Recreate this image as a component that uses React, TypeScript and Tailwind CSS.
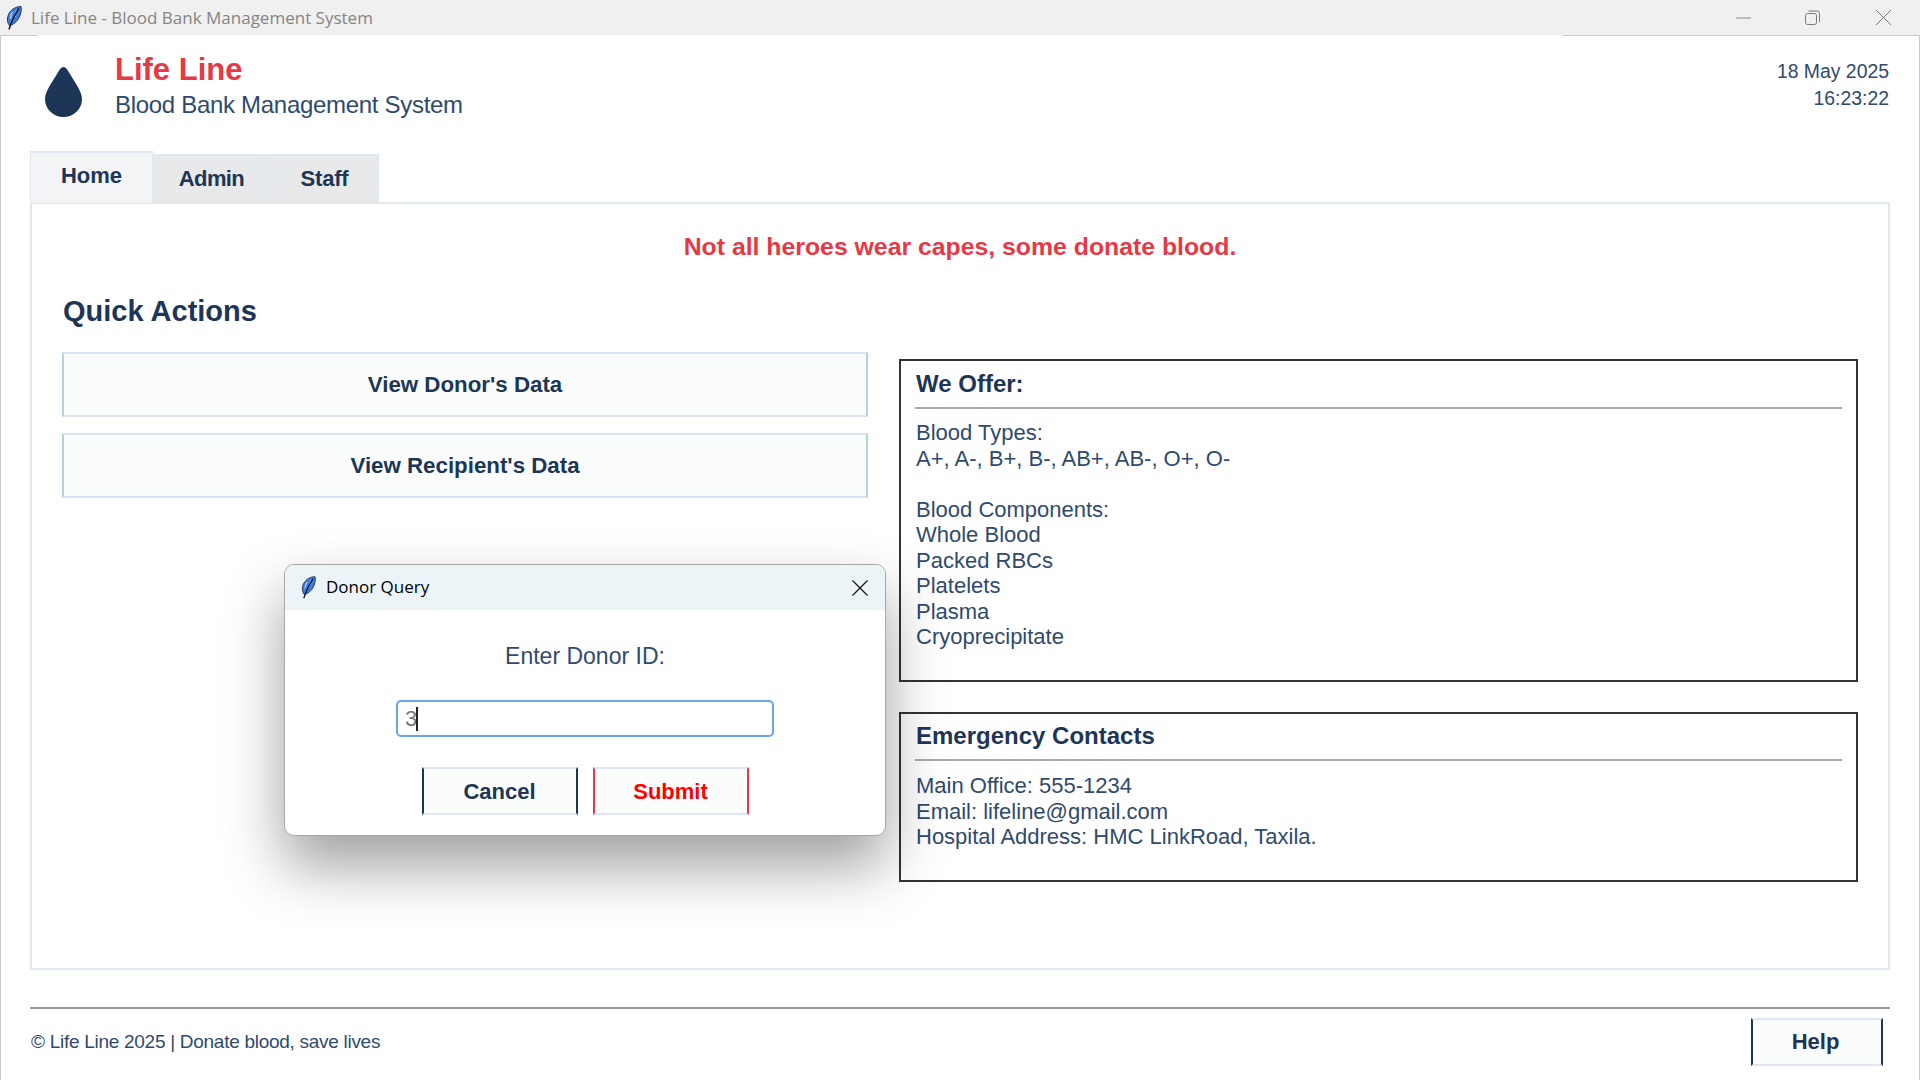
import React from 'react';

function Feather({ className }: { className?: string }) {
    return (
        <svg viewBox="0 0 16 24" className={className}>
            <path d="M15 0.5 C9.5 0.5 3.5 4 1.8 10.5 C1 14 1.5 17 3.5 19.5 C8.5 18.5 13 13.5 14.5 8 C15.3 5 15.6 2.5 15 0.5 Z" fill="#3f7fdc" stroke="#24375e" strokeWidth="1" />
            <path d="M6.5 6 C5 8 4.5 10.5 4.5 13 M10.5 4.5 C9.5 7 9 9 9 11" stroke="#a9ccf5" strokeWidth="1.3" fill="none" />
            <path d="M13 2.5 C9 8 6 14 3 23.5" fill="none" stroke="#0e1526" strokeWidth="1.4" />
        </svg>
    );
}

function Drop() {
    return (
        <svg viewBox="0 0 37 50" className="w-[37px] h-[50px] shrink-0">
            <path d="M18.5 0 C21 0 23 3.5 25 7 C29 14 37 24 37 32 A18.5 18 0 0 1 0 32 C0 24 8 14 12 7 C14 3.5 16 0 18.5 0 Z" fill="#1d3557" />
        </svg>
    );
}

function WindowControls() {
    return (
        <div className="flex items-center h-full">
            <svg viewBox="0 0 15 15" className="w-[15px] h-[15px] mr-[54px]">
                <path d="M0 8 H15" stroke="#8a8a8a" strokeWidth="1" />
            </svg>
            <svg viewBox="0 0 15 15" className="w-[15px] h-[15px] mr-[56px]">
                <rect x="0.5" y="3.5" width="11" height="11" rx="2" fill="none" stroke="#7a7a7a" />
                <path d="M3.5 1 H12 A2.5 2.5 0 0 1 14.5 3.5 V12" fill="none" stroke="#7a7a7a" />
            </svg>
            <svg viewBox="0 0 15 15" className="w-[15px] h-[15px] mr-[29px]">
                <path d="M0 0 L15 15 M15 0 L0 15" stroke="#777777" strokeWidth="1" />
            </svg>
        </div>
    );
}

function InfoBox({ title, className, titleClass, bodyClass, children }: { title: string; className: string; titleClass: string; bodyClass: string; children: React.ReactNode }) {
    return (
        <div className={`border-2 border-[#333333] px-[14px] bg-white ${className}`}>
            <div className={`flex items-center pl-[1px] text-[24px] font-bold text-[#1d3557] ${titleClass}`}>{title}</div>
            <div className="h-[2px] bg-[#aaaaaa]" />
            <div className={`pl-[1px] text-[22px] leading-[25.5px] text-[#2f4a6d] ${bodyClass}`}>{children}</div>
        </div>
    );
}

const BRACKET_BTN = 'h-[48px] bg-[#fbfdfd] border-x-2 border-y-2 border-x-[#1d3557] border-y-[#dfe6f0] text-[22px] font-bold text-[#1d3557] flex items-center justify-center';

export default function App() {
    return (
        <div className="w-[1920px] h-[1080px] relative overflow-hidden bg-white flex flex-col font-['Liberation_Sans',Arial,sans-serif]">
            {/* Title bar */}
            <div className="h-[35px] shrink-0 bg-[#f0f0f0] flex items-center justify-between pl-[6px]">
                <div className="flex items-center">
                    <Feather className="w-[16px] h-[24px]" />
                    <span className="ml-[9px] text-[17px] text-[#858585] font-['Open_Sans',sans-serif]">Life Line - Blood Bank Management System</span>
                </div>
                <WindowControls />
            </div>
            <div className="h-px shrink-0 flex">
                <div className="w-[38px] bg-[#cccccc]" />
                <div className="flex-1" />
                <div className="w-[358px] bg-[#cccccc]" />
            </div>

            <div className="flex-1 flex flex-col border-x border-[#cccccc] pl-[29px] pr-[29px]">
                {/* Header */}
                <div className="h-[115px] shrink-0 flex justify-between">
                    <div className="flex">
                        <div className="ml-[15px] mt-[31px]"><Drop /></div>
                        <div className="ml-[33px] mt-[16px]">
                            <div className="text-[31px] leading-[36px] font-bold text-[#e63946]">Life Line</div>
                            <div className="text-[24px] leading-[34px] tracking-[-0.3px] text-[#2f4a6d]">Blood Bank Management System</div>
                        </div>
                    </div>
                    <div className="mt-[22px] mr-[1px] text-right text-[19.4px] leading-[27px] text-[#2f4a6d]">
                        <div>18 May 2025</div>
                        <div>16:23:22</div>
                    </div>
                </div>

                {/* Tabs */}
                <div className="h-[52px] shrink-0 flex items-end relative z-10 -mb-px text-[22px] font-bold text-[#1d3557]">
                    <div className="w-[123px] h-[52px] bg-[#f3f4f6] border-t-2 border-x border-[#e2e8f0] flex items-center justify-center pb-[5px]">Home</div>
                    <div className="w-[119px] h-[49px] bg-[#e8e9eb] border-t-2 border-r-2 border-[#e2e8f0] flex items-center justify-center pb-[2px] tracking-[-0.6px]">Admin</div>
                    <div className="w-[107px] h-[49px] bg-[#e8e9eb] border-t-2 border-r-2 border-[#e2e8f0] flex items-center justify-center pb-[2px] tracking-[-0.2px]">Staff</div>
                </div>

                {/* Notebook panel */}
                <div className="h-[768px] shrink-0 border-2 border-[#e2e8f0] pl-[30px] pr-[30px]">
                    <div className="mt-[28px] text-center text-[24.8px] leading-[30px] font-bold text-[#e63946]">Not all heroes wear capes, some donate blood.</div>
                    <div className="mt-[33px] flex gap-[31px]">
                        <div className="w-[806px] shrink-0">
                            <div className="h-[34px] flex items-center pl-[1px] text-[29px] font-bold text-[#1d3557]">Quick Actions</div>
                            <div className="mt-[23px] flex flex-col gap-[16px]">
                                <div className="h-[65px] bg-[#fbfdfd] border-2 border-x-[#a8dadc] border-y-[#dce3f0] flex items-center justify-center text-[22.3px] font-bold text-[#1d3557]">View Donor's Data</div>
                                <div className="h-[65px] bg-[#fbfdfd] border-2 border-x-[#a8dadc] border-y-[#dce3f0] flex items-center justify-center text-[22.3px] font-bold text-[#1d3557]">View Recipient's Data</div>
                            </div>
                        </div>
                        <div className="flex-1 mt-[64px] flex flex-col gap-[30px]">
                            <InfoBox title="We Offer:" className="h-[323px]" titleClass="h-[46px]" bodyClass="mt-[11px]">
                                <div>Blood Types:</div>
                                <div>A+, A-, B+, B-, AB+, AB-, O+, O-</div>
                                <div className="h-[25.5px]" />
                                <div>Blood Components:</div>
                                <div>Whole Blood</div>
                                <div>Packed RBCs</div>
                                <div>Platelets</div>
                                <div>Plasma</div>
                                <div>Cryoprecipitate</div>
                            </InfoBox>
                            <InfoBox title="Emergency Contacts" className="h-[170px]" titleClass="h-[45px] pb-[2px]" bodyClass="mt-[12px]">
                                <div>Main Office: 555-1234</div>
                                <div>Email: lifeline@gmail.com</div>
                                <div>Hospital Address: HMC LinkRoad, Taxila.</div>
                            </InfoBox>
                        </div>
                    </div>
                </div>

                {/* Footer */}
                <div className="mt-[37px] h-[2px] shrink-0 bg-[#999999]" />
                <div className="mt-[9px] flex justify-between pl-[1px] pr-[7px]">
                    <div className="h-[48px] flex items-center text-[19px] tracking-[-0.28px] text-[#2f4a6d]">© Life Line 2025 | Donate blood, save lives</div>
                    <div className={`${BRACKET_BTN} w-[132px] pb-[2px] pr-[3px]`}>Help</div>
                </div>
            </div>

            {/* Donor Query dialog */}
            <div className="absolute left-[284px] top-[564px] w-[602px] h-[272px] rounded-[10px] border border-[#a8a8a8] bg-white overflow-hidden shadow-[0_30px_60px_rgba(0,0,0,0.38)] flex flex-col items-center">
                <div className="w-full h-[45px] shrink-0 bg-[#edf4f8] flex items-center justify-between pl-[16px] pr-[17px]">
                    <div className="flex items-center pb-[1px]">
                        <Feather className="w-[15px] h-[23px]" />
                        <span className="ml-[10px] text-[17px] text-black font-['Open_Sans',sans-serif]">Donor Query</span>
                    </div>
                    <svg viewBox="0 0 16 16" className="w-[16px] h-[16px]">
                        <path d="M0.5 0.5 L15.5 15.5 M15.5 0.5 L0.5 15.5" stroke="#111111" strokeWidth="1.2" />
                    </svg>
                </div>
                <div className="mt-[31px] h-[30px] flex items-center text-[23px] text-[#2f4a6d]">Enter Donor ID:</div>
                <div className="mt-[29px] relative">
                    <input readOnly value="3" className="block w-[378px] h-[37px] border-2 border-[#6ba4ec] rounded-[5px] pl-[7px] text-[22px] text-[#777777] outline-none" />
                    <div className="absolute left-[20px] top-[7px] w-[2px] h-[24px] bg-[#222222]" />
                </div>
                <div className="mt-[30px] flex gap-[15px]">
                    <div className={`${BRACKET_BTN} w-[156px]`}>Cancel</div>
                    <div className="w-[156px] h-[48px] bg-[#fbfdfd] border-2 border-x-[#e63946] border-y-[#dfe6f0] text-[22px] font-bold text-[#ff0000] flex items-center justify-center">Submit</div>
                </div>
            </div>
        </div>
    );
}
